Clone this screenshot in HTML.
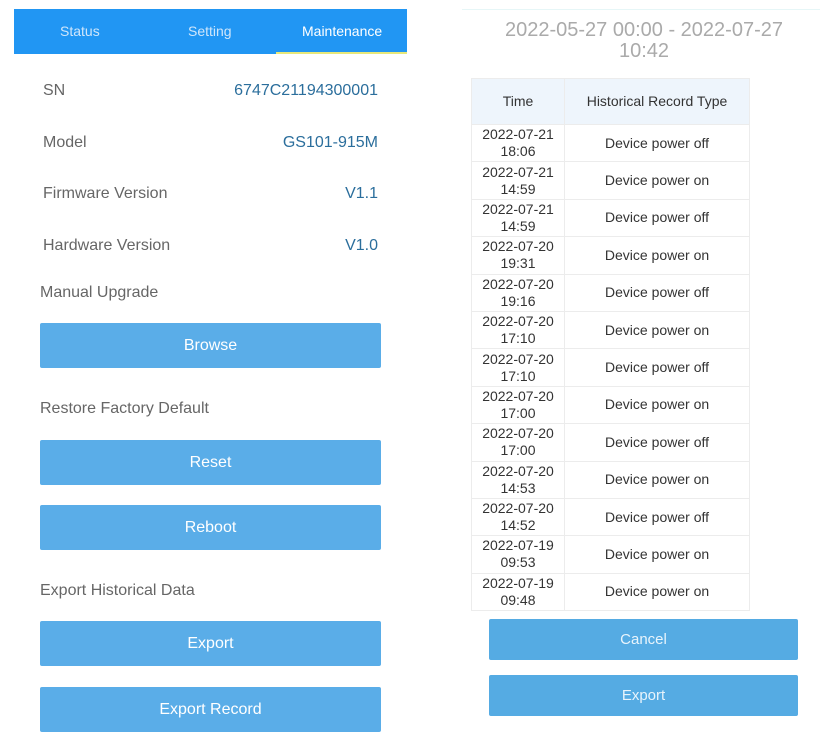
<!DOCTYPE html><html><head><style>
body{margin:0;width:820px;height:737px;background:#fff;font-family:"Liberation Sans",sans-serif;position:relative;overflow:hidden}
.a{position:absolute}
.tab{top:9px;height:45px;background:#2196f3;left:14px;width:393px}
.tab span{position:absolute;top:14px;font-size:14px;color:#cfe6fb}
.lab{left:43px;font-size:16px;color:#666}
.val{right:442px;font-size:16px;color:#2b6e9c}
.sec{left:40px;font-size:16px;color:#666}
.btn{left:40px;width:341px;height:45px;background:#5aade8;color:#fff;font-size:16px;text-align:center;line-height:45px;border-radius:2px}
table{position:absolute;left:471px;top:78px;width:279px;border-collapse:collapse;font-size:14px;color:#333}
td{border:1px solid #ececec;text-align:center;height:36.4px;padding:0;line-height:17px}
td:first-child{width:92px}
tr.h td{background:#eef5fc;height:45px}
.b2{left:489px;width:309px;height:41px;background:#55abe3;color:#e8f4fc;font-size:15px;text-align:center;line-height:41px;border-radius:2px}
</style></head><body>
<div class="a tab"><span style="left:46px">Status</span><span style="left:174px">Setting</span><span style="left:288px;color:#fff">Maintenance</span><div class="a" style="left:262px;top:43px;width:131px;height:2px;background:#e8e87a"></div></div>
<div class="a lab" style="top:82px">SN</div><div class="a val" style="top:82px">6747C21194300001</div>
<div class="a lab" style="top:134px">Model</div><div class="a val" style="top:134px">GS101-915M</div>
<div class="a lab" style="top:185px">Firmware Version</div><div class="a val" style="top:185px">V1.1</div>
<div class="a lab" style="top:237px">Hardware Version</div><div class="a val" style="top:237px">V1.0</div>
<div class="a sec" style="top:284px">Manual Upgrade</div>
<div class="a btn" style="top:323px">Browse</div>
<div class="a sec" style="top:400px">Restore Factory Default</div>
<div class="a btn" style="top:440px">Reset</div>
<div class="a btn" style="top:505px">Reboot</div>
<div class="a sec" style="top:582px">Export Historical Data</div>
<div class="a btn" style="top:621px">Export</div>
<div class="a btn" style="top:687px">Export Record</div>
<div class="a" style="left:462px;top:9px;width:358px;height:1px;background:#e6f6f7"></div>
<div class="a" style="left:462px;width:364px;top:20px;text-align:center;font-size:20px;line-height:21px;color:#aaa">2022-05-27 00:00 - 2022-07-27<br>10:42</div>
<table>
<tr class="h"><td>Time</td><td>Historical Record Type</td></tr>
<tr><td>2022-07-21<br>18:06</td><td>Device power off</td></tr>
<tr><td>2022-07-21<br>14:59</td><td>Device power on</td></tr>
<tr><td>2022-07-21<br>14:59</td><td>Device power off</td></tr>
<tr><td>2022-07-20<br>19:31</td><td>Device power on</td></tr>
<tr><td>2022-07-20<br>19:16</td><td>Device power off</td></tr>
<tr><td>2022-07-20<br>17:10</td><td>Device power on</td></tr>
<tr><td>2022-07-20<br>17:10</td><td>Device power off</td></tr>
<tr><td>2022-07-20<br>17:00</td><td>Device power on</td></tr>
<tr><td>2022-07-20<br>17:00</td><td>Device power off</td></tr>
<tr><td>2022-07-20<br>14:53</td><td>Device power on</td></tr>
<tr><td>2022-07-20<br>14:52</td><td>Device power off</td></tr>
<tr><td>2022-07-19<br>09:53</td><td>Device power on</td></tr>
<tr><td>2022-07-19<br>09:48</td><td>Device power on</td></tr>
</table>
<div class="a b2" style="top:619px">Cancel</div>
<div class="a b2" style="top:675px">Export</div>
</body></html>
